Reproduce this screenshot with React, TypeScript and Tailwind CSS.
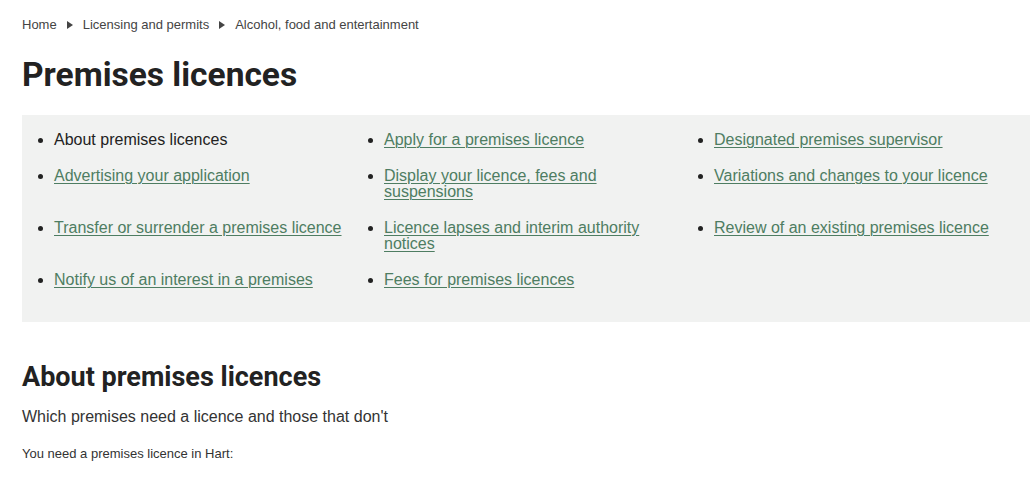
import React from "react";

const items: { text: string; link: boolean }[] = [
  { text: "About premises licences", link: false },
  { text: "Apply for a premises licence", link: true },
  { text: "Designated premises supervisor", link: true },
  { text: "Advertising your application", link: true },
  { text: "Display your licence, fees and suspensions", link: true },
  { text: "Variations and changes to your licence", link: true },
  { text: "Transfer or surrender a premises licence", link: true },
  { text: "Licence lapses and interim authority notices", link: true },
  { text: "Review of an existing premises licence", link: true },
  { text: "Notify us of an interest in a premises", link: true },
  { text: "Fees for premises licences", link: true },
];

function Arrow() {
  return (
    <svg width="6" height="8" viewBox="0 0 6 8" className="mx-[10px]">
      <path d="M0 0 L6 4 L0 8 Z" fill="#444" />
    </svg>
  );
}

export default function App() {
  return (
    <div
      className="w-[1030px] h-[503px] overflow-hidden bg-white text-[#333]"
      style={{ fontFamily: '"Liberation Sans", Arial, sans-serif' }}
    >
      <div className="pl-[22px]">
        <nav className="flex items-center pt-[17px] h-[32px] text-[13px] text-[#444]">
          <span>Home</span>
          <Arrow />
          <span>Licensing and permits</span>
          <Arrow />
          <span>Alcohol, food and entertainment</span>
        </nav>
        <h1
          className="mt-[25px] text-[33.5px] leading-[36px] font-bold text-[#222]"
          style={{ fontFamily: "Roboto, sans-serif" }}
        >
          Premises licences
        </h1>
        <div className="mt-[22px] bg-[#f1f2f1] h-[207px] pt-[17px] pl-[32px]">
          <ul className="grid grid-cols-[330px_330px_330px] gap-y-[20px] list-disc text-[16px] leading-[16px]">
            {items.map((it) => (
              <li key={it.text} className="pr-[30px] marker:text-[#222]">
                {it.link ? (
                  <a
                    href="#"
                    className="text-[#4e7d62] underline underline-offset-[2px] decoration-[1px]"
                  >
                    {it.text}
                  </a>
                ) : (
                  <span className="text-[#222]">{it.text}</span>
                )}
              </li>
            ))}
          </ul>
        </div>
        <h2
          className="mt-[40px] text-[27px] leading-[30px] font-bold text-[#222]"
          style={{ fontFamily: "Roboto, sans-serif" }}
        >
          About premises licences
        </h2>
        <p className="mt-[15px] text-[16px] leading-[20px] text-[#333]">
          Which premises need a licence and those that don't
        </p>
        <p className="mt-[19px] text-[13px] leading-[16px] text-[#333]">
          You need a premises licence in Hart:
        </p>
      </div>
    </div>
  );
}
